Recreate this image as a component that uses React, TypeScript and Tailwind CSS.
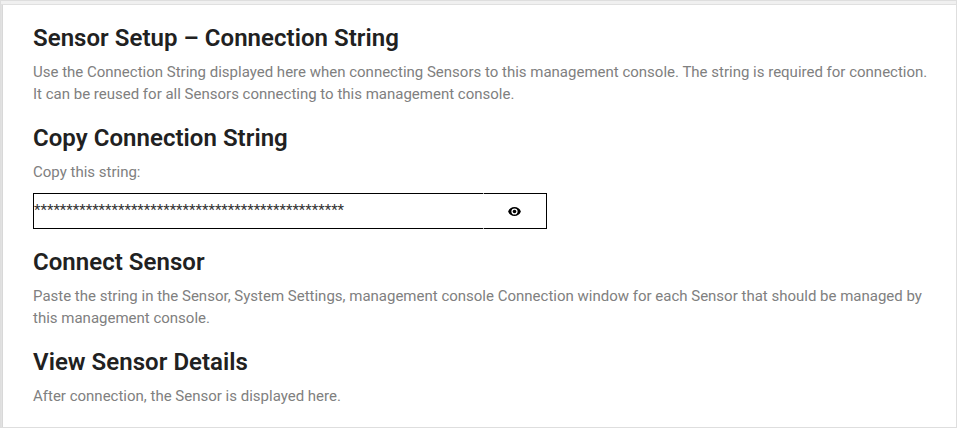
type SectionProps = { title: string; children: React.ReactNode };

function Section({ title, children }: SectionProps) {
  return (
    <section className="mb-[17px]">
      <h2 className="mb-[7px] text-[24px] leading-8 font-semibold tracking-[0.04px] text-[#212121]">{title}</h2>
      <div className="text-[15px] leading-[22px] text-[#808080]">{children}</div>
    </section>
  );
}

function EyeIcon() {
  return (
    <svg width="13" height="9" viewBox="0 0 13 9" fill="none">
      <path
        fillRule="evenodd"
        fill="#000"
        d="M6.5 0C3.6 0 1.1 1.7.1 4.5 1.1 7.3 3.6 9 6.5 9s5.4-1.7 6.4-4.5C11.9 1.7 9.4 0 6.5 0ZM6.5 1.4a3.1 3.1 0 1 1 0 6.2 3.1 3.1 0 0 1 0-6.2Z"
      />
      <circle cx="6.5" cy="4.5" r="1.8" fill="#000" />
    </svg>
  );
}

export default function App() {
  return (
    <div className="flex h-[428px] w-[957px] flex-col overflow-hidden border border-[#dedede] bg-[#e2e2e2] font-['Roboto',sans-serif]">
      <div className="h-1 shrink-0 border-b border-[#e0e0e0] bg-[#f0f0f0]" />
      <main className="ml-px flex-1 border-l border-[#d8d8d8] bg-white pt-[17px] pl-[30px]">
        <Section title="Sensor Setup – Connection String">
          Use the Connection String displayed here when connecting Sensors to this management console. The string is required for connection.
          <br />
          It can be reused for all Sensors connecting to this management console.
        </Section>
        <Section title="Copy Connection String">
          Copy this string:
          <div className="mt-[10px] mb-[11px] flex h-9 w-[514px] text-[#333]">
            <span className="flex-1 border-y border-l border-black pt-[5px]">************************************************</span>
            <span className="w-px border-y border-[#aaa]" />
            <button className="flex w-[63px] items-center justify-center border-y border-r border-black pt-px pr-0.5" aria-label="Show connection string">
              <EyeIcon />
            </button>
          </div>
        </Section>
        <Section title="Connect Sensor">
          Paste the string in the Sensor, System Settings, management console Connection window for each Sensor that should be managed by
          <br />
          this management console.
        </Section>
        <Section title="View Sensor Details">After connection, the Sensor is displayed here.</Section>
      </main>
    </div>
  );
}
